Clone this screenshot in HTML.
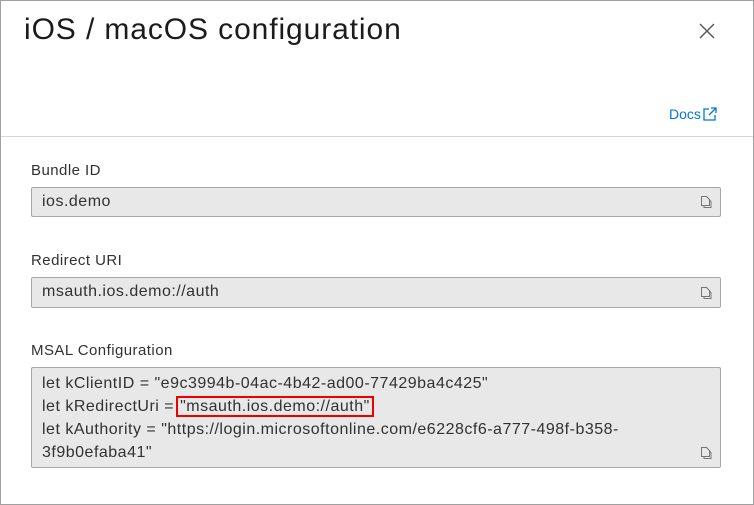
<!DOCTYPE html>
<html><head><style>
body{margin:0;width:754px;height:505px;background:#fff;font-family:"Liberation Sans",sans-serif;color:#323130;position:relative;overflow:hidden}
.frame{position:absolute;left:0;top:0;width:752px;height:503px;border:1px solid #a0a0a0}
.t{position:absolute;left:24px;top:13px;font-size:30px;color:#1b1b1b;letter-spacing:0.9px}
.x{position:absolute;left:698px;top:22px}
.docs{position:absolute;left:669px;top:106px;font-size:14px;color:#0078d4}
.hr{position:absolute;left:1px;right:1px;top:136px;height:1px;background:#d6d6d6}
.l{position:absolute;left:31px;font-size:15px;letter-spacing:0.45px;color:#323130}
.b{position:absolute;left:31px;width:688px;background:#e8e8e8;border:1px solid #a8a8a8;border-radius:2px;font-size:16px;letter-spacing:0.5px;color:#323130}
.b span.v{position:absolute;left:10px}
.cp{position:absolute;right:8px}
.red{border:2px solid #e00;padding:0 2px;margin-left:-3px}
</style></head><body>
<div class="frame"></div>
<div class="t">iOS / macOS configuration</div>
<svg class="x" width="18" height="18" viewBox="0 0 18 18"><path d="M2 2L16 16M16 2L2 16" stroke="#555" stroke-width="1.4"/></svg>
<div class="docs">Docs<svg width="16" height="16" viewBox="0 0 16 16" style="vertical-align:-3px;margin-left:1px"><path d="M7 3H2v11h11V9M9 2h5v5M14 2L7 9" stroke="#0078d4" stroke-width="1.3" fill="none"/></svg></div>
<div class="hr"></div>

<div class="l" style="top:162px">Bundle ID</div>
<div class="b" style="top:187px;height:28px"><span class="v" style="top:5px">ios.demo</span>
<svg class="cp" style="top:7px" width="12" height="14" viewBox="0 0 12 14"><path d="M1.5 1.5h5l3 3v6h-8z M4 10.5v2h7v-6l-1.5-1.5" stroke="#777" fill="none"/></svg></div>

<div class="l" style="top:252px">Redirect URI</div>
<div class="b" style="top:277px;height:29px"><span class="v" style="top:5px">msauth.ios.demo://auth</span>
<svg class="cp" style="top:8px" width="12" height="14" viewBox="0 0 12 14"><path d="M1.5 1.5h5l3 3v6h-8z M4 10.5v2h7v-6l-1.5-1.5" stroke="#777" fill="none"/></svg></div>

<div class="l" style="top:342px">MSAL Configuration</div>
<div class="b" style="top:367px;height:99px"><div style="position:absolute;left:10px;top:4px;line-height:23px;white-space:nowrap">let kClientID = "e9c3994b-04ac-4b42-ad00-77429ba4c425"<br>let kRedirectUri = <span class="red">"msauth.ios.demo://auth"</span><br>let kAuthority = "https://login.microsoftonline.com/e6228cf6-a777-498f-b358-<br>3f9b0efaba41"</div>
<svg class="cp" style="top:78px" width="12" height="14" viewBox="0 0 12 14"><path d="M1.5 1.5h5l3 3v6h-8z M4 10.5v2h7v-6l-1.5-1.5" stroke="#777" fill="none"/></svg></div>
</body></html>
